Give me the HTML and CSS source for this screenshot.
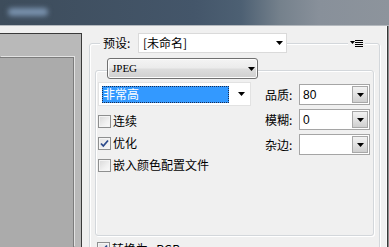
FILE: index.html
```html
<!DOCTYPE html>
<html lang="zh">
<head>
<meta charset="utf-8">
<title>存储为 Web 所用格式</title>
<link rel="stylesheet" href="styles.css">
</head>
<body>
<div class="titlebar"><div class="blurtitle"></div></div>
<div class="titleline"></div>
<div class="main">
  <div class="preview"><div class="preview-inner"></div></div>
  <div class="panel">
    <div class="group1">
      <div class="preset-row">
        <span class="preset-lbl">预设:</span>
        <div class="preset-combo">
          <span class="preset-val">[未命名]</span>
          <svg class="arr" width="7" height="4" viewBox="0 0 7 4"><polygon points="0,0 7,0 3.5,4" fill="#000"/></svg>
        </div>
        <span class="menuicon">
          <svg width="13" height="7" viewBox="0 0 13 7">
            <polygon points="0,1 5,1 2.5,4" fill="#000"/>
            <rect x="5" y="0" width="8" height="1" fill="#000"/>
            <rect x="5" y="2" width="8" height="1" fill="#000"/>
            <rect x="5" y="4" width="8" height="1" fill="#000"/>
            <rect x="5" y="6" width="8" height="1" fill="#000"/>
          </svg>
        </span>
      </div>
      <div class="group2">
        <div class="fmt-btn">
          <span class="fmt-val">JPEG</span>
          <svg class="arr" width="7" height="4" viewBox="0 0 7 4"><polygon points="0,0 7,0 3.5,4" fill="#000"/></svg>
        </div>
        <div class="cols">
          <div class="col-left">
            <div class="qual-combo">
              <span class="qual-sel">非常高</span>
              <svg class="arr" width="7" height="4" viewBox="0 0 7 4"><polygon points="0,0 7,0 3.5,4" fill="#000"/></svg>
            </div>
            <label class="chk-row"><span class="chk"></span><span>连续</span></label>
            <label class="chk-row"><span class="chk checked"><svg width="11" height="11" viewBox="0 0 11 11"><path d="M2 5.5 L4.3 8 L9 2.5" fill="none" stroke="#2c4a8c" stroke-width="1.8"/></svg></span><span>优化</span></label>
            <label class="chk-row"><span class="chk"></span><span>嵌入颜色配置文件</span></label>
          </div>
          <div class="col-right">
            <div class="field-row">
              <span class="field-lbl">品质:</span>
              <div class="spin"><span class="spin-val">80</span><span class="spin-btn"><svg width="7" height="4" viewBox="0 0 7 4"><polygon points="0,0 7,0 3.5,4" fill="#000"/></svg></span></div>
            </div>
            <div class="field-row">
              <span class="field-lbl">模糊:</span>
              <div class="spin"><span class="spin-val">0</span><span class="spin-btn"><svg width="7" height="4" viewBox="0 0 7 4"><polygon points="0,0 7,0 3.5,4" fill="#000"/></svg></span></div>
            </div>
            <div class="field-row">
              <span class="field-lbl">杂边:</span>
              <div class="spin"><span class="spin-val"></span><span class="spin-btn"><svg width="7" height="4" viewBox="0 0 7 4"><polygon points="0,0 7,0 3.5,4" fill="#000"/></svg></span></div>
            </div>
          </div>
        </div>
      </div>
      <label class="chk-row srgb"><span class="chk checked"><svg width="11" height="11" viewBox="0 0 11 11"><path d="M2 5.5 L4.3 8 L9 2.5" fill="none" stroke="#2c4a8c" stroke-width="1.8"/></svg></span><span>转换为 sRGB</span></label>
    </div>
  </div>
  <div class="edge"></div>
</div>
</body>
</html>
```
FILE: styles.css
```css
* { box-sizing: border-box; margin: 0; padding: 0; }
html, body { width: 389px; height: 247px; overflow: hidden; }
body {
  background: #f0f0f0;
  font-family: "Noto Sans CJK SC", "Liberation Sans", sans-serif;
  font-size: 12px;
  line-height: 1;
  color: #000;
}
.titlebar {
  height: 25px;
  position: relative;
  background: linear-gradient(to right, #3d4c5b 0%, #44566a 50%, #4d6073 62%, #75818c 72%, #88909a 82%, #8d949c 100%);
}
.blurtitle {
  position: absolute;
  left: 8px; top: 8px;
  width: 40px; height: 8px;
  border-radius: 4px;
  background: #7890ac;
  filter: blur(2.5px);
}
.titleline { height: 1px; background: #b4b9be; }
.main { display: flex; height: 221px; }

.preview {
  width: 82px;
  margin-top: 7px;
  background: #b9b9b9;
  border-top: 1px solid #3a3a3a;
  border-right: 1px solid #3a3a3a;
  display: flex;
  flex-direction: column;
  align-items: flex-start;
}
.preview-inner {
  margin-top: 23px;
  width: 74px;
  flex: 1;
  background: #ababab;
  border-top: 1px solid #7c7c7c;
  border-right: 1px solid #7c7c7c;
  box-shadow: 1px -1px 0 #e2e2e2;
}

.panel { flex: 1; display: flex; flex-direction: column; }
.edge {
  width: 3px;
  background: linear-gradient(to right, #fafafa 0 1px, #383838 1px 2px, #8c8c8c 2px);
}

.group1 {
  margin: 17px 6px 0 7px;
  height: 260px;
  border: 1px solid #d3d7db;
  border-radius: 3px;
  box-shadow: inset 1px 1px 0 #fff, 1px 1px 0 #fff;
  display: flex;
  flex-direction: column;
  align-items: flex-start;
}
.preset-row {
  margin-top: -11px;
  height: 20px;
  width: 100%;
  display: flex;
  align-items: center;
  padding-left: 10px;
}
.preset-lbl {
  width: 38px;
  height: 20px;
  padding-left: 3px;
  display: flex;
  align-items: center;
  background: #f0f0f0;
}
.preset-combo {
  width: 149px;
  height: 20px;
  background: #fff;
  border: 1px solid #dadada;
  display: flex;
  align-items: center;
  padding: 0 3px 0 4px;
}
.preset-val { flex: 1; }
.arr { display: block; }
.menuicon {
  margin-left: auto;
  margin-right: 14px;
  padding: 0 2px;
  height: 9px;
  display: flex;
  align-items: center;
  background: #f0f0f0;
}

.group2 {
  margin: 17px 5px 0 5px;
  align-self: stretch;
  height: 166px;
  border: 1px solid #d3d7db;
  border-radius: 3px;
  box-shadow: inset 1px 1px 0 #fff, 1px 1px 0 #fff;
  display: flex;
  flex-direction: column;
  align-items: flex-start;
}
.fmt-btn {
  margin: -13px 0 0 11px;
  width: 151px;
  height: 21px;
  border: 1px solid #707070;
  border-radius: 3px;
  background: linear-gradient(to bottom, #f4f4f4 0%, #ebebeb 48%, #dddddd 52%, #cfcfcf 100%);
  box-shadow: inset 0 0 0 1px #fcfcfc;
  display: flex;
  align-items: center;
  padding: 0 2px 0 4px;
}
.fmt-val {
  flex: 1;
  font-family: "Liberation Serif", serif;
  font-size: 11px;
}

.cols {
  display: flex;
  width: 100%;
  margin-top: 3px;
}
.col-left {
  width: 153px;
  margin-left: 2px;
  display: flex;
  flex-direction: column;
}
.qual-combo {
  height: 24px;
  background: #fff;
  border: 1px solid #e2e2e2;
  display: flex;
  align-items: center;
  padding: 0 5px 0 3px;
  margin-bottom: 4px;
}
.qual-sel {
  width: 127px;
  height: 17px;
  background: #3399ff;
  outline: 1px dotted #1a2c50;
  outline-offset: -1px;
  color: #fff;
  display: flex;
  align-items: center;
  padding-left: 1px;
  margin-right: auto;
}
.chk-row {
  height: 22px;
  display: flex;
  align-items: center;
}
.chk {
  width: 13px;
  height: 13px;
  border: 1px solid #8e8f8f;
  background: linear-gradient(135deg, #d8d8d8 0%, #f0f0f0 60%, #fbfbfb 100%);
  box-shadow: inset 0 0 0 1px #f4f4f4;
  margin-right: 2px;
  display: flex;
  align-items: center;
  justify-content: center;
}
.chk.checked { background: linear-gradient(135deg, #e4e4e4 0%, #f7f7f7 100%); }
.chk svg { display: block; }

.col-right {
  margin-left: 14px;
  padding-top: 2px;
  display: flex;
  flex-direction: column;
  gap: 4px;
}
.field-row {
  height: 21px;
  display: flex;
  align-items: center;
}
.field-lbl { width: 34px; }
.spin {
  width: 71px;
  height: 21px;
  background: #fff;
  border: 1px solid #a5a5a5;
  display: flex;
  align-items: center;
  padding: 1px 1px 1px 3px;
}
.spin-val {
  flex: 1;
  font-family: "Liberation Sans", sans-serif;
  font-size: 12px;
}
.spin-btn {
  width: 16px;
  height: 17px;
  border: 1px solid #a8a8a8;
  background: linear-gradient(to bottom, #f2f2f2 0%, #e2e2e2 50%, #cfcfcf 100%);
  display: flex;
  align-items: center;
  justify-content: center;
}
.spin-btn svg { display: block; }

.srgb {
  margin: 4px 0 0 7px;
  height: 17px;
}
```
